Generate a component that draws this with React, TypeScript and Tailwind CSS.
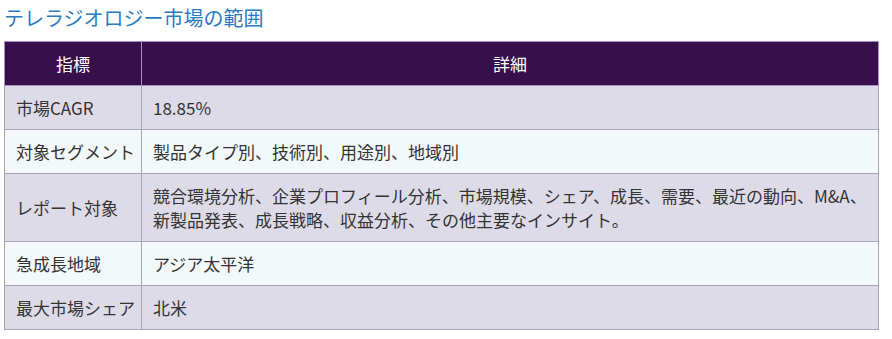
const rows: [string, string][] = [
  ['市場CAGR', '18.85%'],
  ['対象セグメント', '製品タイプ別、技術別、用途別、地域別'],
  [
    'レポート対象',
    '競合環境分析、企業プロフィール分析、市場規模、シェア、成長、需要、最近の動向、M&A、新製品発表、成長戦略、収益分析、その他主要なインサイト。',
  ],
  ['急成長地域', 'アジア太平洋'],
  ['最大市場シェア', '北米'],
];

export default function App() {
  return (
    <div
      className="bg-white w-[892px] h-[339px] px-[4px] pt-[4px]"
      style={{ fontFamily: '"Noto Sans CJK JP", "Noto Sans", sans-serif' }}
    >
      <h2 className="text-[20px] leading-[28px] text-[#2b7bbf] font-normal mb-[9px]">
        テレラジオロジー市場の範囲
      </h2>
      <table className="w-[875px] border-collapse text-[17px] leading-[24px] text-[#333]">
        <thead>
          <tr className="bg-[#37104b] text-white h-[44px]">
            <th className="w-[137px] font-normal border border-[#a98fc4] px-[12px] py-0">指標</th>
            <th className="font-normal border border-[#a98fc4] px-[12px] py-0">詳細</th>
          </tr>
        </thead>
        <tbody>
          {rows.map(([k, v], i) => (
            <tr key={k} className={i % 2 === 0 ? 'bg-[#dedbe9]' : 'bg-[#f3f8fb]'}>
              <td className="border border-[#aaa4bb] pl-[11px] pr-[6px] py-[9.5px] align-middle whitespace-nowrap">{k}</td>
              <td className="border border-[#aaa4bb] pl-[11px] pr-[8px] py-[9.5px] align-middle">{v}</td>
            </tr>
          ))}
        </tbody>
      </table>
    </div>
  );
}
